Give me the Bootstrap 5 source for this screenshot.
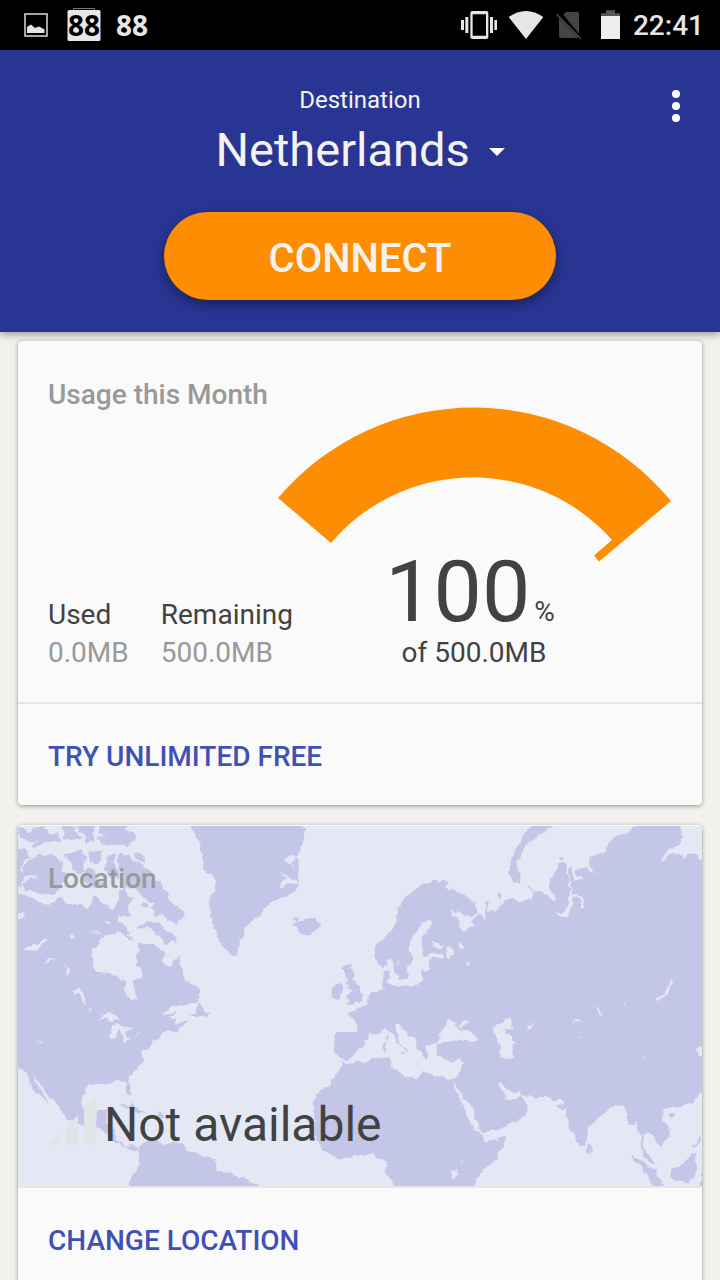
<!DOCTYPE html>
<html lang="en">
<head>
<meta charset="utf-8">
<meta name="viewport" content="width=device-width, initial-scale=1">
<title>Connect</title>
<link href="https://cdn.jsdelivr.net/npm/bootstrap@5.3.0/dist/css/bootstrap.min.css" rel="stylesheet">
<style>
  body { font-family: Roboto, "Noto Sans", sans-serif; background: #f2f1ed; color: #424242; font-size: 28px; line-height: 38px; }
  .statusbar { height: 50px; background: #000; color: #e6e6e6; padding: 0 16px 0 24px; }
  .clock { font-weight: 500; line-height: 50px; padding-top: 2px; }
  .count { font-family: "Noto Sans", sans-serif; font-weight: 700; line-height: 50px; }
  .app-header { background: #283593; color: #f5f2ee; padding: 34px 0 32px; box-shadow: 0 2px 8px rgba(0,0,0,.4); z-index: 2; }
  .dest-label { font-size: 24px; line-height: 32px; }
  .dest-select { appearance: none; border: 0; padding: 0 34px 0 0; margin-top: 2px; color: inherit; font-size: 47px; line-height: 64px; height: 64px;
    background: url("data:image/svg+xml,%3Csvg xmlns='http://www.w3.org/2000/svg' width='16' height='8'%3E%3Cpath d='M0 0H16L8 8Z' fill='%23fff'/%3E%3C/svg%3E") no-repeat right top 30px; }
  .dest-select option { color: #424242; }
  .btn-connect, .btn-connect:hover { margin-top: 30px; background: #fd8d03; color: #f5f2ee; font-size: 40px; font-weight: 500; line-height: 56px; padding: 19px 105px 13px; border: 0; box-shadow: 0 4px 12px rgba(0,0,0,.4); }
  .btn-menu { top: 32px; right: 28px; line-height: 0; padding: 8px 12px; border: 0; }
  .feed { padding: 9px 18px; scrollbar-width: none; }
  .panel { --bs-card-border-width: 0; --bs-card-border-radius: 4px; --bs-card-bg: #fafafa; color: #424242; margin-bottom: 20px; box-shadow: 0 1px 4px rgba(0,0,0,.4); flex: none; }
  .panel-main { padding: 35px 30px 30px; }
  .panel-title { color: #999; font-size: 28px; line-height: 38px; font-weight: 500; margin: 0; }
  .panel-action { border-top: 2px solid #e6e6e6; padding: 34px 30px 29px; }
  .panel-action a { color: #3f51b5; font-weight: 500; text-decoration: none; }
  .dim { color: #999; }
  .gauge { margin-top: 31px; overflow: visible; }
  .total { width: 340px; margin-right: 28px; }
  .percent { font-size: 86px; line-height: 84px; }
  .location { min-height: 361px; border-radius: 4px 4px 0 0; padding-bottom: 33px; }
  .world { inset: 1px 0 0; width: 100%; height: calc(100% - 1px); }
  .place { font-size: 48px; line-height: 56px; }
</style>
</head>
<body>
<div class="vh-100 d-flex flex-column overflow-hidden">
  <div class="statusbar d-flex align-items-center flex-shrink-0">
    <svg width="24" height="24" viewBox="0 0 24 24"><path d="M1 1H23V23H1Z" fill="none" stroke="#ddd" stroke-width="1.5"/><path d="M3 20V14L7 11.500 11 15 15 13.500 20.500 16.500V20Z" fill="#e6e6e6"/></svg>
    <svg class="ms-3" width="40" height="36" viewBox="0 0 40 36"><path d="M9.500 4V1.500H30.500V4" fill="none" stroke="#777"/><rect x="3.500" y="3" width="33" height="31" rx="1.500" fill="#e6e6e6"/><text x="20" y="29" text-anchor="middle" font-family="Noto Sans" font-weight="700" font-size="28">88</text></svg>
    <span class="count ms-2 ps-1">88</span>
    <div class="ms-auto d-flex align-items-center">
      <svg width="36" height="30" viewBox="62 30 108 90" fill="#e6e6e6"><path fill-rule="evenodd" d="M96 33H138Q144 33 144 39V111Q144 117 138 117H96Q90 117 90 111V39Q90 33 96 33ZM97 43V107H137V43ZM62 60H71V90H62ZM75 51H84V99H75ZM149 51H158V99H149ZM162 60H171V90H162Z"/></svg>
      <svg class="ms-2 me-2" width="42" height="30" viewBox="195 30 126 90"><path d="M206 51Q258 15 310 51L258 117Z" fill="#e6e6e6"/></svg>
      <svg width="30" height="30" viewBox="345 30 90 90"><path d="M370 44L378 36H412Q417 36 417 41V101ZM357 54L415 112Q414 114 410 114H363Q357 114 357 108Z" fill="#444"/><path d="M350 43L423 117" stroke="#444" stroke-width="5"/></svg>
      <svg class="ms-3" width="20" height="30" viewBox="480 30 60 90"><path d="M480 48V40H495V31H522V40H537V48Z" fill="#555"/><path d="M480 48H537V117H480Z" fill="#eee"/></svg>
      <span class="clock ps-2 ms-1">22:41</span>
    </div>
  </div>

  <header class="app-header position-relative d-flex flex-column align-items-center flex-shrink-0">
    <label class="dest-label" for="dest">Destination</label>
    <select class="dest-select" id="dest"><option>Netherlands</option></select>
    <button type="button" class="btn btn-connect rounded-pill">CONNECT</button>
    <button type="button" class="btn btn-menu position-absolute" aria-label="Menu"><svg width="8" height="32" viewBox="0 0 8 32" fill="#fff"><circle cx="4" cy="4" r="4"/><circle cx="4" cy="16" r="4"/><circle cx="4" cy="28" r="4"/></svg></button>
  </header>

  <main class="feed d-flex flex-column flex-grow-1 overflow-auto">
    <section class="card panel">
      <div class="panel-main">
        <div class="d-flex justify-content-between align-items-start">
          <h2 class="panel-title text-nowrap">Usage this Month</h2>
          <svg class="gauge flex-shrink-0" width="394" height="143" viewBox="278 407 394 143"><path d="M278 498A256 256 0 0 1 671 501L599 561.500 594 555.500 612 540A186 186 0 0 0 331 543Z" fill="#fd8d03"/></svg>
        </div>
        <div class="d-flex justify-content-between align-items-end">
          <div class="d-flex">
            <div>Used<br><span class="dim">0.0MB</span></div>
            <div class="ms-4 ps-2">Remaining<br><span class="dim">500.0MB</span></div>
          </div>
          <div class="total text-center">
            <div class="d-flex justify-content-center align-items-baseline pe-2"><span class="percent">100</span><span class="ps-1">%</span></div>
            <div>of 500.0MB</div>
          </div>
        </div>
      </div>
      <div class="panel-action"><a href="#">TRY UNLIMITED FREE</a></div>
    </section>

    <section class="card panel">
      <div class="panel-main location position-relative overflow-hidden d-flex flex-column justify-content-between">
        <svg class="world position-absolute" viewBox="0 18 2052 1080" preserveAspectRatio="xMidYMid slice" aria-hidden="true">
          <defs><filter id="coast" x="0" y="0" width="1" height="1" color-interpolation-filters="sRGB"><feTurbulence type="fractalNoise" baseFrequency=".035" numOctaves="3" seed="4"/><feDisplacementMap in="SourceGraphic" scale="22" xChannelSelector="R" yChannelSelector="G"/></filter></defs>
          <g filter="url(#coast)">
          <path fill="#e4e8f4" d="M-40-20H2100V1140H-40Z"/>
          <g fill="#c3c6e7">
            <!-- North America, Arctic islands, west Greenland -->
            <path d="M-20 215L20 220 45 245 95 255 110 240 135 235 155 255 190 255 210 268 215 245 230 225 245 240 265 255 285 270 300 245 300 215 325 210 345 240 330 255 335 290 300 290 290 325 330 345 355 370 400 372 425 385 435 400 432 425 455 437 470 420 478 405 490 440 510 485 545 505 550 530 540 545 480 548 420 575H-20Z"/>
            <path d="M0 22L20 25 30 40 45 28 70 22 90 30 100 45 115 40 125 60 100 65 85 60 70 72 45 80 40 70 60 60 40 62 10 58 0 40ZM125 10L160 20 180 35 190 55 170 58 150 60 130 55 140 40ZM175 10H228V68L205 70 200 50 185 35ZM240 10H340L320 30 345 40 350 60 330 75 300 78 270 74 245 65 238 50 265 48 240 35ZM-20 85L20 88 42 108 15 125 5 150 20 160 10 178 15 200-20 195ZM45 110L90 105 112 108 130 125 135 150 160 160 150 180 135 195 120 215 95 225 70 215 25 208 15 190 35 180 60 170 20 165 12 145 25 125ZM140 100L165 95 195 92 205 110 195 140 200 160 180 170 160 150 165 130 145 120ZM215 92H255L240 130 215 125ZM262 110L285 98 300 100 288 125 300 150V180L275 170 258 150ZM305 105L335 102 340 120 370 130 390 150 400 175 430 185 450 215 455 240 500 280 485 300 475 315 440 290 435 278 415 290 395 265 410 250 380 235 350 205 330 200 320 215 310 200 320 170 300 140ZM345 98L370 105 385 125 355 120ZM205 140L225 150 240 180 260 190 235 205 210 195 195 175ZM360 320L385 305 420 305 440 325 470 350 478 375 460 365 440 372 420 345 395 325 365 330Z"/>
            <path d="M510 10L530 40 545 70 555 110 560 150 580 165 595 185 590 220 570 235 580 290 585 320 600 350 615 385 640 400 655 408 665 380 676 345 681 320 706 300 731 285 751 250 796 235 831 210 841 195V150L836 110 846 90 861 50 856 10Z"/>
            <!-- United States, Mexico, Central America -->
            <path d="M-20 535H545L530 555 490 560 470 580 430 595 450 585 475 595 470 615 510 602 480 630 450 637 435 640 425 650 400 665 395 680 375 690V730L345 755 332 770 335 800 340 825 325 815 320 790 295 782 265 790 235 787 205 798 193 825 190 860 200 890 230 895 240 870 270 870 265 910 290 930 295 955 320 975 350 972 368 985 345 987 320 980 290 965 270 945 240 925 200 915 160 900 128 880 125 860 100 835 70 802 60 785 45 765 55 790 75 825 90 848 70 835 45 800 30 765 0 740H-20ZM520 588L545 545 550 560 575 580 570 595 550 588ZM305 855L340 852 375 875 395 885 360 875 330 862ZM400 885L430 880 440 892 410 895Z"/>
            <path d="M333 1120V1090L345 1060 365 1030 362 995 375 965 400 958 430 970 490 970 510 990 540 1002 575 1008 595 1030 600 1055 640 1060 690 1078 730 1105V1120Z"/>
            <!-- Iceland, Britain, Ireland -->
            <path d="M821 290L841 295 838 305 861 300 881 292 901 290 909 310 901 330 866 347 846 340 838 320 821 315 834 305ZM976 440L1001 432 996 445 1009 450 1001 475 1021 495 1026 515 1038 522 1031 545 996 552 979 555 996 540 986 530 1001 515 991 490 981 475ZM951 490L976 485 974 520 966 535 941 538V510Z"/>
            <!-- Europe, Africa, Asia -->
            <path d="M1011 572L1041 550 1066 515 1101 505 1096 480 1101 455 1116 450 1118 415 1096 442 1076 430 1071 400V375L1106 345 1126 320 1136 280 1151 245 1166 225 1196 205 1226 190 1246 180 1266 185 1276 178 1291 195 1281 200 1306 210 1336 225 1356 240 1376 260 1378 275 1356 298V325L1368 320 1366 305 1381 285 1401 297 1404 280 1401 245 1418 240 1406 260 1411 275 1431 278 1436 262 1466 240 1486 235 1501 245 1531 235 1541 240 1546 215 1541 208 1586 222 1606 240 1614 245 1611 230 1596 205V178L1608 165 1618 128 1646 130V165L1656 185 1651 230 1656 245 1631 280 1614 278 1631 290 1646 288 1656 270 1664 240 1681 230 1691 262 1701 262 1686 228 1661 225 1659 190 1651 150 1659 140 1666 145 1671 175 1696 180 1676 160V150L1701 140 1716 150 1736 158 1716 140 1714 108 1768 98 1764 75 1786 50 1826 38 1846 25 1876 10H1991L1996 50 1976 75 1946 98 1921 132 1956 110 1991 100 1998 118 2006 105 2036 108 2080 130V800L2052 815 2021 848 1986 858 1956 865 1936 870 1929 890 1946 910 1959 930 1956 955 1924 978 1906 950 1886 938 1874 945V970L1886 1000 1906 1015 1912 1040 1901 1030 1881 1010 1868 980V940L1856 908 1834 915 1831 890 1811 855 1771 865 1756 885 1711 920 1706 960 1686 983 1671 960 1651 910 1646 860 1631 870 1596 832 1551 830 1511 825 1511 835 1536 858 1521 885 1486 910 1446 925 1401 942 1401 963 1464 950 1456 980 1431 1020 1386 1060 1355 1120H1150L1131 1098 1106 1060V1018L1076 1012 1066 1000 996 1010 956 1012 916 990 906 970 884 940 891 895 884 865 888 845 906 815 936 795 941 780 966 745 976 720 951 705V638L986 640 1016 638 1014 610 1001 595 988 582Z"/>
            <!-- Novaya Zemlya and Arctic islets -->
            <path d="M1545 10H1620L1571 40 1536 65 1511 95 1498 130 1504 165 1511 188 1486 185 1466 160 1476 140 1481 110 1496 85 1506 60 1526 35ZM1436 225L1446 217 1454 225 1446 237ZM1526 192L1541 207 1533 212ZM1624 112H1636V121H1624Z"/>
            <!-- Sri Lanka, Sumatra, Borneo, Hainan, Philippines -->
            <path d="M1708 970L1718 972 1725 992 1717 1002 1707 997ZM1838 1005L1861 1015 1896 1045 1916 1055 1931 1080V1120H1925L1886 1070 1866 1040 1846 1020ZM1956 1050L1976 1040 2001 1025 2021 1000 2036 1000 2031 1020 2038 1045 2026 1070 2011 1088 1966 1078 1956 1065ZM2046 1060L2070 1050V1120H2046ZM2028 980L2046 955 2050 962 2034 982Z"/>
          </g>
          <g fill="#e4e8f4">
            <!-- Hudson Bay, northern lakes, Great Lakes, Gulf of California -->
            <path d="M265 345L300 335 320 345 350 365 362 370 365 390 355 430 372 445V475L345 485V500L355 540 340 543 325 510V488L275 460 238 455 217 410 222 385ZM20 390L45 375 60 375 75 358 95 355 70 375 55 390 35 392ZM75 432L95 418 115 418 90 428ZM142 435L158 450 150 470 145 455ZM165 510L185 500 200 540 205 555 190 545 180 520 170 530ZM155 350L165 345 167 357 159 361ZM-20 275L15 277 20 297-20 305ZM205 330L245 342 255 350ZM255 295L280 305 275 313Z"/>
            <path d="M240 600L275 572 285 582 305 600 280 602 265 595ZM275 658L280 620 295 608 345 625 325 635V650L345 655 375 632 360 648 320 662 310 645 300 625 290 655ZM60 660L70 668 64 671ZM430 583L460 560 485 552 510 565 515 590 490 595 470 575ZM210 560L222 570 215 574ZM45 765L60 788 90 838 75 825Z"/>
            <path d="M781 150L816 170 843 192 811 195 781 203 791 188 811 180ZM796 120L821 100 836 115 816 130 836 150ZM560 195L580 198 578 220 562 210Z"/>
            <!-- White Sea, Baltic, Scandinavian lakes -->
            <path d="M1301 272L1356 292 1362 300 1358 325 1345 338 1331 335 1321 305ZM1211 305L1236 300 1241 315 1226 335 1211 350 1208 375 1211 400 1226 408 1271 400 1281 410 1236 418 1231 430 1236 445 1226 455 1214 450 1206 490 1186 500 1166 495 1146 505 1121 500 1111 490 1106 470 1118 450 1114 415 1121 425 1131 455 1141 480 1166 475 1171 440 1181 435 1191 405 1171 390 1181 355 1196 340 1206 325ZM1284 378L1302 388 1307 403 1292 411 1284 396ZM1321 358L1331 368 1339 390 1324 385ZM1246 365L1276 375 1266 385 1246 380ZM1136 420L1144 425 1139 433ZM1342 425H1358V440Z"/>
            <!-- Mediterranean, Black Sea, Caspian, Red Sea, Persian Gulf -->
            <path d="M970 722L986 718 1016 708 1026 685 1051 660 1056 643 1084 640 1101 630 1116 637 1131 655 1156 680 1161 695 1141 702 1156 706 1166 690 1141 658 1131 638V615H1144L1156 632 1191 660 1194 680 1214 712 1226 720 1228 705 1221 690 1224 675 1256 670V705L1271 718 1306 722 1331 715 1334 735 1321 772 1286 775 1246 765 1214 755 1196 780 1156 765 1114 745 1121 725 1116 712 1076 715 1046 722 1011 730 981 732Z"/>
            <path d="M1264 660L1266 635 1291 602 1311 608 1306 620 1326 628 1370 640 1381 658 1371 668 1321 658 1281 668 1256 672ZM1316 615L1351 598 1356 610 1326 620ZM1424 628L1451 605 1471 596 1481 602 1478 615 1494 618 1486 625 1461 625 1466 640 1481 655 1491 668 1476 673 1486 685 1488 715 1461 717 1444 705V680L1434 650Z"/>
            <path d="M1301 782L1356 850 1371 895 1393 940 1425 935 1464 925V950L1401 963 1396 950 1376 930 1346 885 1326 830ZM1436 788L1448 782 1461 805 1486 818 1506 812 1511 825 1496 835 1471 840 1461 825 1451 815Z"/>
            <!-- Asian and African lakes -->
            <path d="M1959 478L1964 485 1956 510 1936 532 1916 540 1912 535 1936 522 1951 500ZM1524 615L1546 605 1536 630 1526 628ZM1654 620L1666 600 1701 602 1666 608ZM1678 652L1690 647 1695 652ZM2031 690L2070 670V715L2041 705ZM1811 550L1821 553 1816 559ZM1736 565L1741 585 1751 587 1746 567ZM1876 712L1886 714 1880 717ZM1298 1055L1316 1050 1321 1065 1306 1075ZM1331 1012L1338 1030 1334 1030ZM1606 845L1631 840 1636 850 1616 858Z"/>
          </g>
          <path fill="#c3c6e7" d="M290 305L315 312 338 335 320 345 300 335 288 345 280 330ZM368 250L388 245 393 260 378 270ZM1096 460L1111 452 1118 470 1106 480 1111 500 1096 505ZM1098 670L1106 667 1109 687 1101 692ZM1100 650H1106V662H1100ZM1954 882H1969L1966 892 1956 894Z"/>
          </g>
        </svg>
        <h2 class="panel-title position-relative">Location</h2>
        <div class="d-flex align-items-start position-relative">
          <svg width="48" height="48" viewBox="0 0 48 48" fill="#e1e3e6"><path d="M0 48L12 36V48ZM18 48V30L30 18V48ZM36 48V12L48 0V48Z"/></svg>
          <span class="place ms-2">Not available</span>
        </div>
      </div>
      <div class="panel-action"><a href="#">CHANGE LOCATION</a></div>
    </section>
  </main>
</div>
<script src="https://cdn.jsdelivr.net/npm/bootstrap@5.3.0/dist/js/bootstrap.bundle.min.js"></script>
</body>
</html>
